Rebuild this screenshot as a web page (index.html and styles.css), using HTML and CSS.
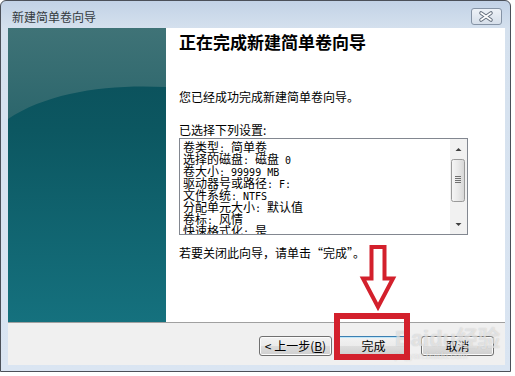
FILE: index.html
```html
<!DOCTYPE html>
<html lang="zh-CN">
<head>
    <meta charset="UTF-8">
    <title>新建简单卷向导</title>
    <link rel="stylesheet" href="styles.css">
</head>
<body>
    <div class="window">
        <div class="titlebar">
            <span class="title">新建简单卷向导</span>
            <button class="close-btn" aria-label="关闭">
                <svg width="29" height="15" viewBox="0 0 29 15">
                    <path d="M9 4L19 11M19 4L9 11" stroke="#66717f" stroke-width="3.6" stroke-linecap="round"/>
                    <path d="M9 4L19 11M19 4L9 11" stroke="#ffffff" stroke-width="1.6" stroke-linecap="round"/>
                </svg>
            </button>
        </div>

        <div class="client">
            <div class="main">
                <div class="side-art">
                    <svg width="158" height="294" viewBox="0 0 158 294">
                        <defs>
                            <linearGradient id="artBase" x1="0" y1="0" x2="0" y2="1">
                                <stop offset="0" stop-color="#0a4d58"/>
                                <stop offset="0.35" stop-color="#0c5761"/>
                                <stop offset="1" stop-color="#15717e"/>
                            </linearGradient>
                            <linearGradient id="artTop" x1="0" y1="0" x2="0" y2="1">
                                <stop offset="0" stop-color="#3f7377"/>
                                <stop offset="1" stop-color="#2c666c"/>
                            </linearGradient>
                        </defs>
                        <rect width="158" height="294" fill="url(#artBase)"/>
                        <path d="M0 0H158V59C100 56 40 64 0 91Z" fill="url(#artTop)"/>
                    </svg>
                </div>

                <div class="content">
                    <h1>正在完成新建简单卷向导</h1>
                    <p class="intro">您已经成功完成新建简单卷向导。</p>
                    <p class="label">已选择下列设置:</p>

                    <div class="summary">
                        <div class="summary-text">
                            <div class="row">卷类型<span class="lat">: </span>简单卷</div>
                            <div class="row">选择的磁盘<span class="lat">: </span>磁盘<span class="lat"> 0</span></div>
                            <div class="row">卷大小<span class="lat">: 99999 MB</span></div>
                            <div class="row">驱动器号或路径<span class="lat">: F:</span></div>
                            <div class="row">文件系统<span class="lat">: NTFS</span></div>
                            <div class="row">分配单元大小<span class="lat">: </span>默认值</div>
                            <div class="row">卷标<span class="lat">: </span>风情</div>
                            <div class="row">快速格式化<span class="lat">: </span>是</div>
                        </div>
                        <div class="scrollbar">
                            <svg width="17" height="95" viewBox="0 0 17 95">
                                <defs>
                                    <linearGradient id="thumbFill" x1="0" y1="0" x2="1" y2="0">
                                        <stop offset="0" stop-color="#f6f6f6"/>
                                        <stop offset="0.5" stop-color="#e9e9e9"/>
                                        <stop offset="1" stop-color="#d6d6d6"/>
                                    </linearGradient>
                                </defs>
                                <rect width="17" height="95" fill="#f1f1f1"/>
                                <path d="M5.5 12L8.5 9L11.5 12Z" fill="#404040"/>
                                <rect x="1.5" y="20.5" width="13" height="42" rx="2" fill="url(#thumbFill)" stroke="#9a9a9a"/>
                                <path d="M5 37.5h6M5 39.5h6M5 41.5h6M5 43.5h6" stroke="#707070"/>
                                <path d="M5.5 84L8.5 87L11.5 84Z" fill="#404040"/>
                            </svg>
                        </div>
                    </div>

                    <p class="hint">若要关闭此向导，请单击“完成”。</p>
                </div>
            </div>

            <div class="buttons">
                <button class="btn">&lt; 上一步(<u>B</u>)</button>
                <button class="btn btn-default">完成</button>
                <button class="btn btn-cancel">取消</button>
            </div>
        </div>
    </div>

    <div class="watermark">
        <span class="wm-logo">Baidu经验</span>
        <span class="wm-url">jingyan.baidu.com</span>
    </div>

    <!-- red marks drawn over the screenshot -->
    <svg class="annotation" width="515" height="376" viewBox="0 0 515 376">
        <path d="M371.5 247H384.5V278.5H393L378 307L363 278.5H371.5Z" fill="none" stroke="#d3202c" stroke-width="4"/>
        <rect x="337" y="316" width="70" height="41" fill="none" stroke="#d3202c" stroke-width="6"/>
    </svg>
</body>
</html>
```

FILE: styles.css
```css
* {
    margin: 0;
    padding: 0;
    box-sizing: border-box;
}

body {
    position: relative;
    width: 515px;
    height: 376px;
    overflow: hidden;
    background: #ffffff;
    font-family: "Noto Sans CJK SC", sans-serif;
    font-size: 12px;
    color: #000000;
}

.window {
    width: 511px;
    height: 372px;
    display: flex;
    flex-direction: column;
    padding: 0 5px 6px 7px;
    border: 1px solid #4b5059;
    border-radius: 6px 6px 0 0;
    background: linear-gradient(#c2d2e6 0, #d5e1ee 28px, #dae5f2 100%);
}

.titlebar {
    height: 27px;
    display: flex;
    justify-content: space-between;
    align-items: flex-start;
}

.title {
    margin: 8px 0 0 4px;
    font-size: 12px;
    line-height: 16px;
    color: #353a40;
}

.close-btn {
    width: 31px;
    height: 17px;
    margin: 7px 3px 0 0;
    display: flex;
    align-items: center;
    justify-content: center;
    border: 1px solid #8593a5;
    border-radius: 3px;
    background: linear-gradient(#eef2f7, #d6dfea);
}

.client {
    flex: 1;
    display: flex;
    flex-direction: column;
    background: #f0f0f0;
}

.main {
    height: 294px;
    display: flex;
    background: #ffffff;
}

.side-art {
    width: 158px;
    height: 294px;
}

.side-art svg {
    display: block;
}

.content {
    flex: 1;
    padding: 4px 0 0 13px;
}

h1 {
    font-size: 17px;
    line-height: 20px;
    font-weight: bold;
}

.intro {
    margin-top: 37px;
    line-height: 16px;
}

.label {
    margin-top: 17px;
    line-height: 16px;
}

.summary {
    width: 289px;
    height: 97px;
    display: flex;
    border: 1px solid #828790;
    background: #ffffff;
}

.summary-text {
    flex: 1;
    overflow: hidden;
    padding: 2px 0 0 3px;
    font-size: 12px;
    line-height: 12px;
    white-space: nowrap;
}

.summary-text .row {
    height: 12px;
}

.lat {
    font-family: "DejaVu Sans Mono", monospace;
    font-size: 10px;
    line-height: 12px;
    white-space: pre;
}

.scrollbar {
    width: 17px;
}

.scrollbar svg {
    display: block;
}

.hint {
    margin-top: 10px;
    line-height: 16px;
}

.buttons {
    flex: 1;
    display: flex;
    justify-content: flex-end;
    align-items: flex-start;
    gap: 5px;
    padding: 13px 11px 0 0;
    border-top: 1px solid #a0a0a0;
}

.btn {
    width: 73px;
    height: 20px;
    font-family: "Noto Sans CJK SC", sans-serif;
    font-size: 12px;
    line-height: 16px;
    color: #000000;
    border: 1px solid #707070;
    border-radius: 3px;
    background: linear-gradient(#f2f2f2 0%, #ebebeb 50%, #dddddd 51%, #cfcfcf 100%);
    box-shadow: inset 0 0 0 1px #fbfbfb;
}

.btn-default {
    border-color: #3c7fb1;
    box-shadow: inset 0 0 0 1px #bfe6f9;
}

.btn-cancel {
    margin-left: 6px;
}

.watermark {
    position: absolute;
    left: 395px;
    top: 327px;
    display: flex;
    flex-direction: column;
    pointer-events: none;
}

.wm-logo {
    font-family: "Liberation Sans", "Noto Sans CJK SC", sans-serif;
    font-size: 22px;
    font-weight: bold;
    line-height: 24px;
    color: rgba(255, 255, 255, 0.55);
    text-shadow: 0 0 1px rgba(140, 140, 140, 0.5);
}

.wm-url {
    font-family: "Liberation Sans", sans-serif;
    font-size: 9px;
    line-height: 10px;
    color: rgba(255, 255, 255, 0.6);
    text-shadow: 0 0 1px rgba(140, 140, 140, 0.45);
}

.annotation {
    position: absolute;
    left: 0;
    top: 0;
    pointer-events: none;
}
```
